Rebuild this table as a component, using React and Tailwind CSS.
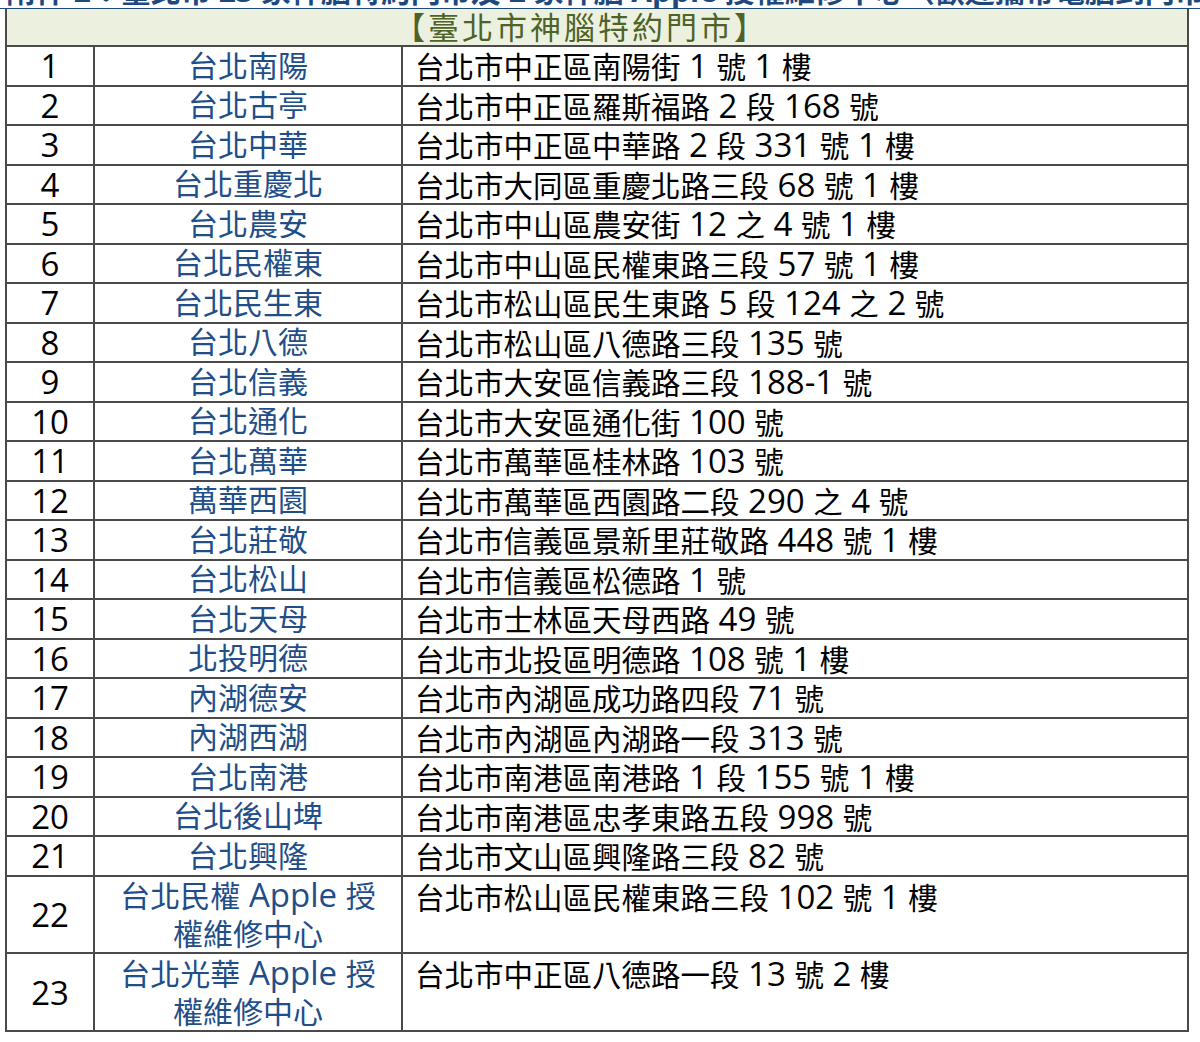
import React from "react";

const rows = [
  ["1", "台北南陽", "台北市中正區南陽街 1 號 1 樓"],
  ["2", "台北古亭", "台北市中正區羅斯福路 2 段 168 號"],
  ["3", "台北中華", "台北市中正區中華路 2 段 331 號 1 樓"],
  ["4", "台北重慶北", "台北市大同區重慶北路三段 68 號 1 樓"],
  ["5", "台北農安", "台北市中山區農安街 12 之 4 號 1 樓"],
  ["6", "台北民權東", "台北市中山區民權東路三段 57 號 1 樓"],
  ["7", "台北民生東", "台北市松山區民生東路 5 段 124 之 2 號"],
  ["8", "台北八德", "台北市松山區八德路三段 135 號"],
  ["9", "台北信義", "台北市大安區信義路三段 188-1 號"],
  ["10", "台北通化", "台北市大安區通化街 100 號"],
  ["11", "台北萬華", "台北市萬華區桂林路 103 號"],
  ["12", "萬華西園", "台北市萬華區西園路二段 290 之 4 號"],
  ["13", "台北莊敬", "台北市信義區景新里莊敬路 448 號 1 樓"],
  ["14", "台北松山", "台北市信義區松德路 1 號"],
  ["15", "台北天母", "台北市士林區天母西路 49 號"],
  ["16", "北投明德", "台北市北投區明德路 108 號 1 樓"],
  ["17", "內湖德安", "台北市內湖區成功路四段 71 號"],
  ["18", "內湖西湖", "台北市內湖區內湖路一段 313 號"],
  ["19", "台北南港", "台北市南港區南港路 1 段 155 號 1 樓"],
  ["20", "台北後山埤", "台北市南港區忠孝東路五段 998 號"],
  ["21", "台北興隆", "台北市文山區興隆路三段 82 號"],
];

const tall = [
  ["22", ["台北民權 Apple 授", "權維修中心"], "台北市松山區民權東路三段 102 號 1 樓"],
  ["23", ["台北光華 Apple 授", "權維修中心"], "台北市中正區八德路一段 13 號 2 樓"],
];

const font = "font-['Open_Sans','Noto_Sans_CJK_TC',sans-serif]";
const cell = "border-r-2 border-b-2 border-[#4a4a4a]";

function Mixed({ text }) {
  const parts = text.split(/([ A-Za-z0-9\-]+)/);
  return (
    <>
      {parts.map((p, i) =>
        /[ A-Za-z0-9\-]/.test(p) && i % 2 === 1 ? (
          <span key={i} className="text-[33px]">{p}</span>
        ) : (
          <React.Fragment key={i}>{p}</React.Fragment>
        )
      )}
    </>
  );
}

export default function App() {
  return (
    <div className={`w-[1200px] h-[1042px] bg-white ${font} text-black`}>
      <div className="h-[9px] overflow-hidden border-b border-[#1f497d] pl-[6px]">
        <div className="mt-[-27px] text-[30px] leading-[36px] font-bold text-[#1f497d] whitespace-nowrap">
          附件 2：臺北市 23 家神腦特約門市及 2 家神腦 Apple 授權維修中心（歡迎攜帶電腦到門市諮詢）
        </div>
      </div>
      <div className="ml-[5px] w-[1184px] border-l-2 border-[#4a4a4a] grid grid-cols-[88px_308px_1fr] grid-rows-[38px_repeat(21,39.5px)_77.5px_78px]">
        <div className="col-span-3 border-r-2 border-b-2 border-[#4a4a4a] bg-[#ebf1de] text-[#4f6228] text-[31px] tracking-[3px] leading-none flex items-center justify-center pr-[32px]">
          【臺北市神腦特約門市】
        </div>
        {rows.map(([n, name, addr]) => (
          <React.Fragment key={n}>
            <div className={`${cell} flex items-center justify-center text-[33px] leading-none`}>{n}</div>
            <div className={`${cell} flex items-center justify-center text-[30px] leading-none text-[#1f4e89]`}>{name}</div>
            <div className={`${cell} flex items-center pl-[12px] text-[29.5px] leading-none whitespace-nowrap`}>
              <span><Mixed text={addr} /></span>
            </div>
          </React.Fragment>
        ))}
        {tall.map(([n, name, addr]) => (
          <React.Fragment key={n}>
            <div className={`${cell} flex items-center justify-center text-[33px] leading-none`}>{n}</div>
            <div className={`${cell} flex flex-col items-center justify-center text-[30px] leading-[38px] text-[#1f4e89]`}>
              <span><Mixed text={name[0]} /></span>
              <span>{name[1]}</span>
            </div>
            <div className={`${cell} pl-[12px] pt-[1px] text-[29.5px] leading-[38px] whitespace-nowrap`}>
              <Mixed text={addr} />
            </div>
          </React.Fragment>
        ))}
      </div>
    </div>
  );
}
